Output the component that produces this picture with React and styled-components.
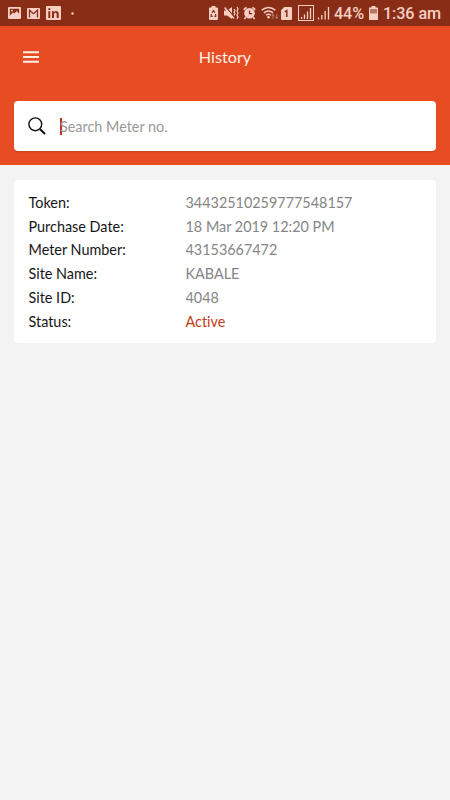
import React from 'react';
import styled, { createGlobalStyle } from 'styled-components';

const GlobalStyle = createGlobalStyle`
	* {
		box-sizing: border-box;
	}
	body {
		margin: 0;
		background: #f3f3f3;
		font-family: Lato, sans-serif;
		font-variant-ligatures: none;
	}
`;

const Screen = styled.div`
	width: 100%;
	min-height: 800px;
	background: #f3f3f3;
`;

const StatusBarStyled = styled.div`
	height: 26px;
	padding: 0 9px 0 8px;
	display: flex;
	align-items: center;
	justify-content: space-between;
	background: #8a2d16;
	color: #f5cfc4;
	font-family: Roboto, sans-serif;
	font-size: 16.2px;
	font-weight: 500;
	line-height: 26px;
`;

const Group = styled.div`
	height: 26px;
	display: flex;
	align-items: center;
`;

const Glyph = styled.svg`
	display: block;
	flex: none;
	margin-left: ${(props) => props.$gap || 0}px;
`;

const StatusText = styled.span`
	width: ${(props) => props.$width}px;
	margin-left: ${(props) => props.$gap}px;
	padding-top: 2px;
	letter-spacing: -0.1px;
	white-space: nowrap;
`;

const HeaderStyled = styled.header`
	height: 139px;
	padding: 0 14px;
	background: #e74c23;
`;

const TitleBar = styled.div`
	height: 62px;
	display: grid;
	grid-template-columns: 34px 1fr 34px;
	align-items: center;
	h1 {
		margin: 0;
		color: #fff0e9;
		font-size: 16.2px;
		font-weight: 400;
		line-height: 20px;
		text-align: center;
	}
`;

const MenuButton = styled.button`
	width: 34px;
	height: 34px;
	padding: 0 0 0 9px;
	display: flex;
	align-items: center;
	border: 0;
	background: none;
`;

const SearchBox = styled.label`
	height: 50px;
	margin-top: 13.4px;
	padding-left: 14px;
	display: flex;
	align-items: center;
	border-radius: 4px;
	background: #fff;
	box-shadow: 0 1px 1px rgba(90, 30, 10, 0.25);
`;

const Caret = styled.span`
	width: 2px;
	height: 17px;
	margin-left: 14px;
	background: #bd3514;
`;

const Placeholder = styled.span`
	margin-left: -2px;
	padding-top: 2px;
	color: #999;
	font-size: 14.4px;
	line-height: 20px;
`;

const Card = styled.section`
	margin: 15px 14px 0;
	padding: 10.8px 14.5px 9.7px;
	border-radius: 4px;
	background: #fff;
`;

const Row = styled.div`
	height: 23.75px;
	display: grid;
	grid-template-columns: 157px 1fr;
	align-items: center;
	font-size: 14.4px;
	line-height: 23.75px;
`;

const Label = styled.span`
	color: #161616;
`;

const Value = styled.span`
	color: ${(props) => (props.$active ? '#bf3c18' : '#858585')};
`;

const details = [
	{ label: 'Token:', value: '34432510259777548157' },
	{ label: 'Purchase Date:', value: '18 Mar 2019 12:20 PM' },
	{ label: 'Meter Number:', value: '43153667472' },
	{ label: 'Site Name:', value: 'KABALE' },
	{ label: 'Site ID:', value: '4048' },
	{ label: 'Status:', value: 'Active', active: true },
];

const BAR = '#8a2d16';

function Notifications() {
	return (
		<Group>
			<Glyph width="13" height="12" viewBox="0 0 13 12">
				<rect width="13" height="12" rx="1" fill="currentColor" />
				<path d="M1.8 1.8h9.4v5L8.6 4 6.5 6.6 4.8 5.4 1.8 8.8z" fill={BAR} />
				<circle cx="4" cy="3.7" r=".9" fill="currentColor" />
			</Glyph>
			<Glyph $gap={6} width="13" height="11" viewBox="0 0 13 11">
				<rect width="13" height="11" rx="1" fill="currentColor" />
				<path d="M2.5 9.6V2.2l4 3.5 4-3.5v7.4" fill="none" stroke={BAR} strokeWidth="1.3" />
			</Glyph>
			<Glyph $gap={6} width="15" height="14" viewBox="0 0 15 14">
				<rect width="15" height="14" rx="1" fill="currentColor" />
				<path
					d="M2.3 5.2h2V12h-2zM2.3 2.3h2v1.8h-2zM6 5.2h1.9v.9c1.4-1.8 4.8-1.2 4.8 1.7V12h-2V8.3c0-2.2-2.7-2-2.7 0V12H6z"
					fill={BAR}
				/>
			</Glyph>
			<Glyph $gap={10} width="3" height="3" viewBox="0 0 3 3">
				<circle cx="1.5" cy="1.5" r="1.2" fill="currentColor" />
			</Glyph>
		</Group>
	);
}

function SystemIcons() {
	return (
		<Group>
			{/* power saving */}
			<Glyph width="9" height="14" viewBox="0 0 9 14">
				<path d="M2.5 0h4v1.6H8q1 0 1 1V13q0 1-1 1H1q-1 0-1-1V2.6q0-1 1-1h1.5z" fill="currentColor" />
				<path d="M3 6.6 4.5 4.6 6 6.6M6.7 8v2.4H5.4M3.6 10.4H2.2V8" fill="none" stroke={BAR} strokeWidth="1.2" />
			</Glyph>
			{/* muted, vibrating */}
			<Glyph $gap={6} width="15" height="14" viewBox="0 0 15 14">
				<path d="M0 4.5h3L8 1v12L3 9.5H0z" fill="currentColor" />
				<path d="M1.7 1 10.5 11.5" stroke={BAR} strokeWidth="1.2" />
				<path d="M.5 1.5 10 12.5" stroke="currentColor" strokeWidth="1.5" />
				<path
					d="m10 3 1 1.6-1 1.6 1 1.6-1 1.6M13 1l1 2-1 2 1 2-1 2 1 2-1 2"
					fill="none"
					stroke="currentColor"
					strokeWidth="1.2"
				/>
			</Glyph>
			{/* alarm */}
			<Glyph $gap={4} width="13" height="14" viewBox="0 0 14 14">
				<path d="M.8 3.5 3.8 1M13.2 3.5l-3-2.5M3 11.5l-1.5 2M11 11.5l1.5 2" stroke="currentColor" strokeWidth="1.8" />
				<circle cx="7" cy="7.3" r="5.7" fill="currentColor" />
				<path d="M7 4.2v3.5h3" fill="none" stroke={BAR} strokeWidth="1.3" />
			</Glyph>
			{/* wifi with transfer arrows */}
			<Glyph $gap={5} width="18" height="14" viewBox="0 0 18 14">
				<path
					d="M.7 4.2q6.8-5.4 13.6 0M2.9 6.8q4.6-3.6 9.2 0M5.1 9.2q2.4-1.8 4.8 0"
					fill="none"
					stroke="currentColor"
					strokeWidth="1.5"
				/>
				<circle cx="7.5" cy="11.3" r="1.3" fill="currentColor" />
				<path
					d="M12 13V8.5m-1.4 1.7L12 8.5l1.4 1.7M15.8 8v4.5m-1.4-1.7 1.4 1.7 1.4-1.7"
					fill="none"
					stroke="currentColor"
					opacity="0.45"
				/>
			</Glyph>
			{/* sim 1 */}
			<Glyph $gap={2} width="11" height="13" viewBox="0 0 11 13">
				<path d="M3.3 0H10q1 0 1 1v11q0 1-1 1H1q-1 0-1-1V3.3z" fill="currentColor" />
				<path d="M3.8 4.8 5.8 3.6V10" fill="none" stroke={BAR} strokeWidth="1.5" />
			</Glyph>
			<Glyph $gap={6} width="16" height="16" viewBox="0 0 16 16">
				<rect x=".5" y=".5" width="15" height="15" fill="none" stroke="currentColor" />
				<path d="M3.5 14v-2M6.5 14V9.5M9.5 14V6.5M12.5 14V3" stroke="currentColor" strokeWidth="1.3" />
			</Glyph>
			<Glyph $gap={3} width="13" height="14" viewBox="0 0 13 14">
				<path d="M1.5 13.5v-2M4.8 13.5V9M8.1 13.5V5M11.5 13.5V1" stroke="currentColor" strokeWidth="1.3" />
			</Glyph>
			<StatusText $gap={4} $width={31}>44%</StatusText>
			<Glyph $gap={4} width="9" height="14" viewBox="0 0 9 14">
				<path d="M2.5 0h4v1.5H9V14H0V1.5h2.5z" fill="currentColor" />
				<path d="M1 3h7v4.5H1z" fill={BAR} opacity="0.55" />
			</Glyph>
			<StatusText $gap={5} $width={58}>1:36 am</StatusText>
		</Group>
	);
}

function Header() {
	return (
		<HeaderStyled>
			<TitleBar>
				<MenuButton aria-label="Menu">
					<svg width="16" height="12" viewBox="0 0 16 12">
						<path d="M0 1.3h16M0 6h16M0 10.7h16" stroke="#fff0e9" strokeWidth="2" />
					</svg>
				</MenuButton>
				<h1>History</h1>
			</TitleBar>
			<SearchBox>
				<svg width="18" height="18" viewBox="0 0 18 18" fill="none" stroke="#111">
					<circle cx="7.3" cy="7.3" r="6.4" strokeWidth="1.4" />
					<path d="M11.9 11.9 17 17" strokeWidth="2.1" />
				</svg>
				<Caret />
				<Placeholder>Search Meter no.</Placeholder>
			</SearchBox>
		</HeaderStyled>
	);
}

function App() {
	return (
		<Screen>
			<GlobalStyle />
			<StatusBarStyled>
				<Notifications />
				<SystemIcons />
			</StatusBarStyled>
			<Header />
			<Card>
				{details.map(({ label, value, active }) => (
					<Row key={label}>
						<Label>{label}</Label>
						<Value $active={active}>{value}</Value>
					</Row>
				))}
			</Card>
		</Screen>
	);
}

export default App;
